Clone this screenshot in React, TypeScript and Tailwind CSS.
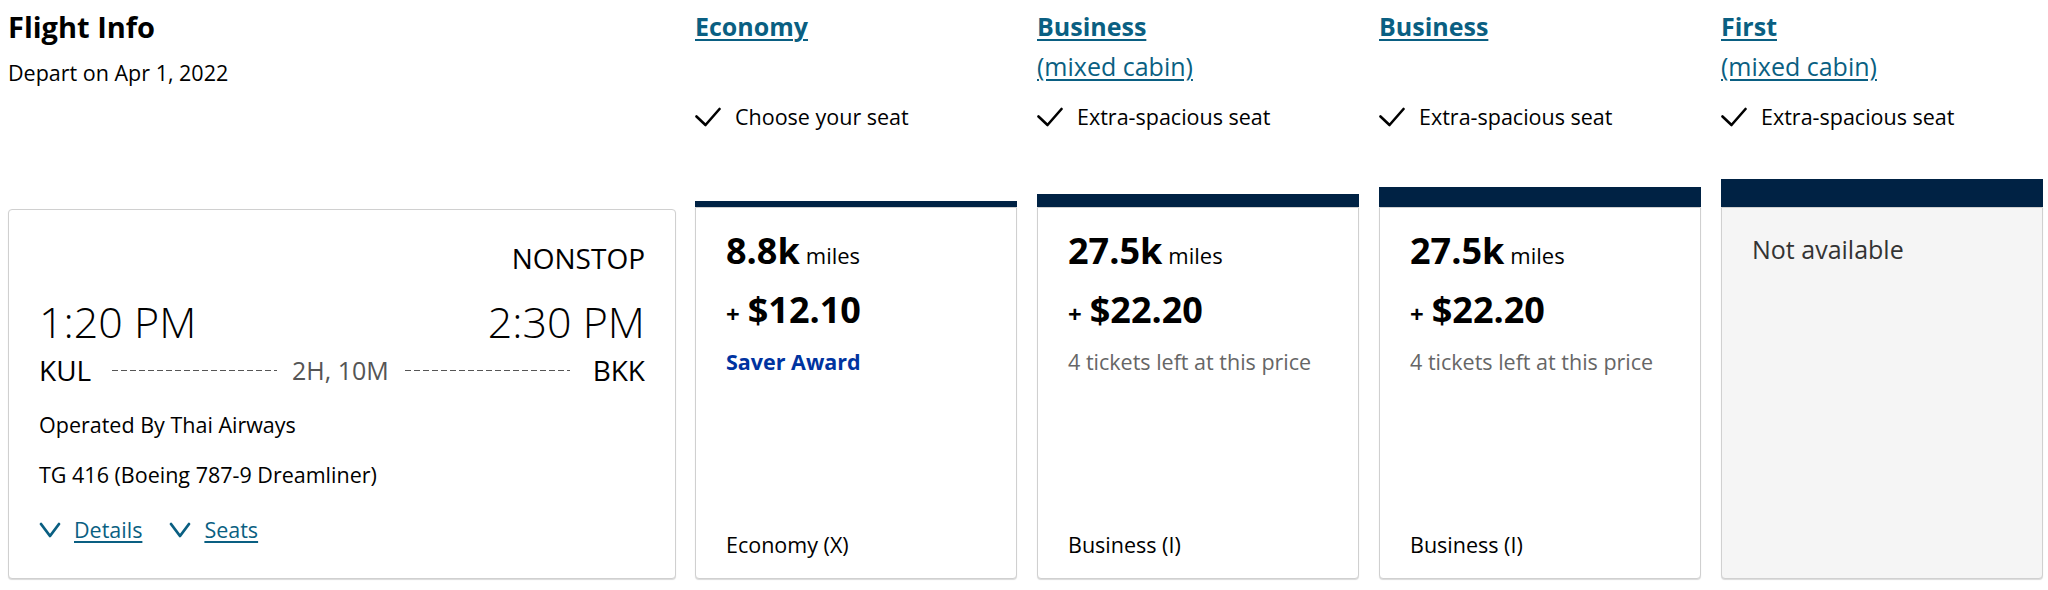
import React from 'react';

interface Fare {
  title: string;
  mixed?: boolean;
  feature: string;
  barHeight: string;
  miles?: string;
  price?: string;
  note?: string;
  saver?: boolean;
  cabin?: string;
}

const fares: Fare[] = [
  { title: 'Economy', feature: 'Choose your seat', barHeight: 'h-[6px]', miles: '8.8k', price: '$12.10', saver: true, cabin: 'Economy (X)' },
  { title: 'Business', mixed: true, feature: 'Extra-spacious seat', barHeight: 'h-[13px]', miles: '27.5k', price: '$22.20', note: '4 tickets left at this price', cabin: 'Business (I)' },
  { title: 'Business', feature: 'Extra-spacious seat', barHeight: 'h-[20px]', miles: '27.5k', price: '$22.20', note: '4 tickets left at this price', cabin: 'Business (I)' },
  { title: 'First', mixed: true, feature: 'Extra-spacious seat', barHeight: 'h-[28px]' },
];

const CheckIcon = () => (
  <svg width="26" height="20" viewBox="0 0 26 20" fill="none" className="shrink-0">
    <polyline points="1.5,9.5 10.5,18 24.5,2" stroke="#000" strokeWidth="2.6" strokeLinecap="round" strokeLinejoin="round" />
  </svg>
);

const Chevron = () => (
  <svg width="22" height="18" viewBox="0 0 22 18" fill="none" className="shrink-0">
    <polyline points="2,3 11,15 20,3" stroke="#0a5f82" strokeWidth="2.8" strokeLinecap="round" strokeLinejoin="round" />
  </svg>
);

const Dashes = ({ className }: { className: string }) => (
  <div className={`flex-1 h-px bg-[repeating-linear-gradient(90deg,#555_0,#555_6px,transparent_6px,transparent_9px)] ${className}`} />
);

const FlightCard = () => (
  <div className="h-[370px] rounded-[4px] border border-[#d0d0d0] shadow-[0_1px_1px_rgba(0,0,0,0.15)] bg-white pl-[30px] pr-[30px] pt-[30px]">
    <div className="text-right text-[28px] leading-[36px]">NONSTOP</div>

    <div className="mt-[21px] flex justify-between text-[43px] font-light leading-[50px]">
      <span>1:20 PM</span>
      <span>2:30 PM</span>
    </div>

    <div className="mt-[5px] flex items-center h-[36px]">
      <span className="text-[28px] leading-[36px]">KUL</span>
      <Dashes className="ml-[21px] mr-[15px]" />
      <span className="text-[25px] leading-[36px] text-[#555]">2H, 10M</span>
      <Dashes className="ml-[16px] mr-[23px]" />
      <span className="text-[28px] leading-[36px]">BKK</span>
    </div>

    <div className="mt-[23px] text-[21.5px] leading-[28px]">Operated By Thai Airways</div>
    <div className="mt-[22px] text-[21.5px] leading-[28px]">TG 416 (Boeing 787-9 Dreamliner)</div>

    <div className="mt-[27px] flex items-center text-[21.5px] leading-[28px] text-[#0a5f82]">
      <Chevron />
      <a href="#" className="ml-[13px] underline decoration-[1.5px] underline-offset-[3px]">Details</a>
      <span className="ml-[27px]"><Chevron /></span>
      <a href="#" className="ml-[13px] underline decoration-[1.5px] underline-offset-[3px]">Seats</a>
    </div>
  </div>
);

const FareColumn = ({ fare }: { fare: Fare }) => {
  const available = !!fare.miles;
  return (
    <div className="w-[322px] flex flex-col">
      <div className="h-[197px] flex flex-col">
        <div className="h-[93px]">
          <a href="#" className="block w-fit text-[25px] font-bold leading-[32px] text-[#0a5f82] underline decoration-2 underline-offset-[3px]">
            {fare.title}
          </a>
          {fare.mixed && (
            <a href="#" className="mt-[8px] block w-fit text-[25px] leading-[32px] text-[#0a5f82] underline decoration-[1.5px] underline-offset-[3px]">
              (mixed cabin)
            </a>
          )}
        </div>
        <div className="flex items-center gap-[14px] text-[21.5px] leading-[28px]">
          <CheckIcon />
          <span>{fare.feature}</span>
        </div>
        <div className="flex-1" />
        <div className={`${fare.barHeight} bg-[#002244]`} />
      </div>

      {available ? (
        <div className="h-[372px] flex flex-col rounded-b-[4px] border border-[#d0d0d0] shadow-[0_1px_1px_rgba(0,0,0,0.15)] bg-white pl-[30px] pr-[20px] pt-[21px] pb-[19px]">
          <div className="text-[36px] leading-[44px]">
            <span className="font-bold">{fare.miles}</span>
            <span className="ml-[6px] text-[22px]">miles</span>
          </div>
          <div className="mt-[12px] text-[36px] leading-[42px]">
            <span className="text-[24px] font-bold">+</span>
            <span className="ml-[8px] font-bold">{fare.price}</span>
          </div>
          {fare.saver ? (
            <div className="mt-[13px] text-[21.5px] font-bold leading-[28px] text-[#0033a0]">Saver Award</div>
          ) : (
            <div className="mt-[13px] text-[21.5px] leading-[28px] text-[#666]">{fare.note}</div>
          )}
          <div className="mt-auto text-[21.5px] leading-[28px]">{fare.cabin}</div>
        </div>
      ) : (
        <div className="h-[372px] rounded-b-[4px] border border-[#d0d0d0] shadow-[0_1px_1px_rgba(0,0,0,0.15)] bg-[#f5f5f5] pl-[30px] pt-[25px]">
          <div className="text-[25px] leading-[32px] text-[#333]">Not available</div>
        </div>
      )}
    </div>
  );
};

export default function App() {
  return (
    <div className="w-[2048px] h-[590px] bg-white flex pl-[8px] pt-[10px] font-['Open_Sans',sans-serif] text-black">
      <div className="w-[668px] flex flex-col">
        <div className="h-[199px]">
          <h1 className="text-[29px] font-bold leading-[34px]">Flight Info</h1>
          <p className="mt-[15px] text-[21.5px] leading-[28px]">Depart on Apr 1, 2022</p>
        </div>
        <FlightCard />
      </div>

      <div className="ml-[19px] flex gap-[20px]">
        {fares.map((fare, i) => (
          <FareColumn key={i} fare={fare} />
        ))}
      </div>
    </div>
  );
}
